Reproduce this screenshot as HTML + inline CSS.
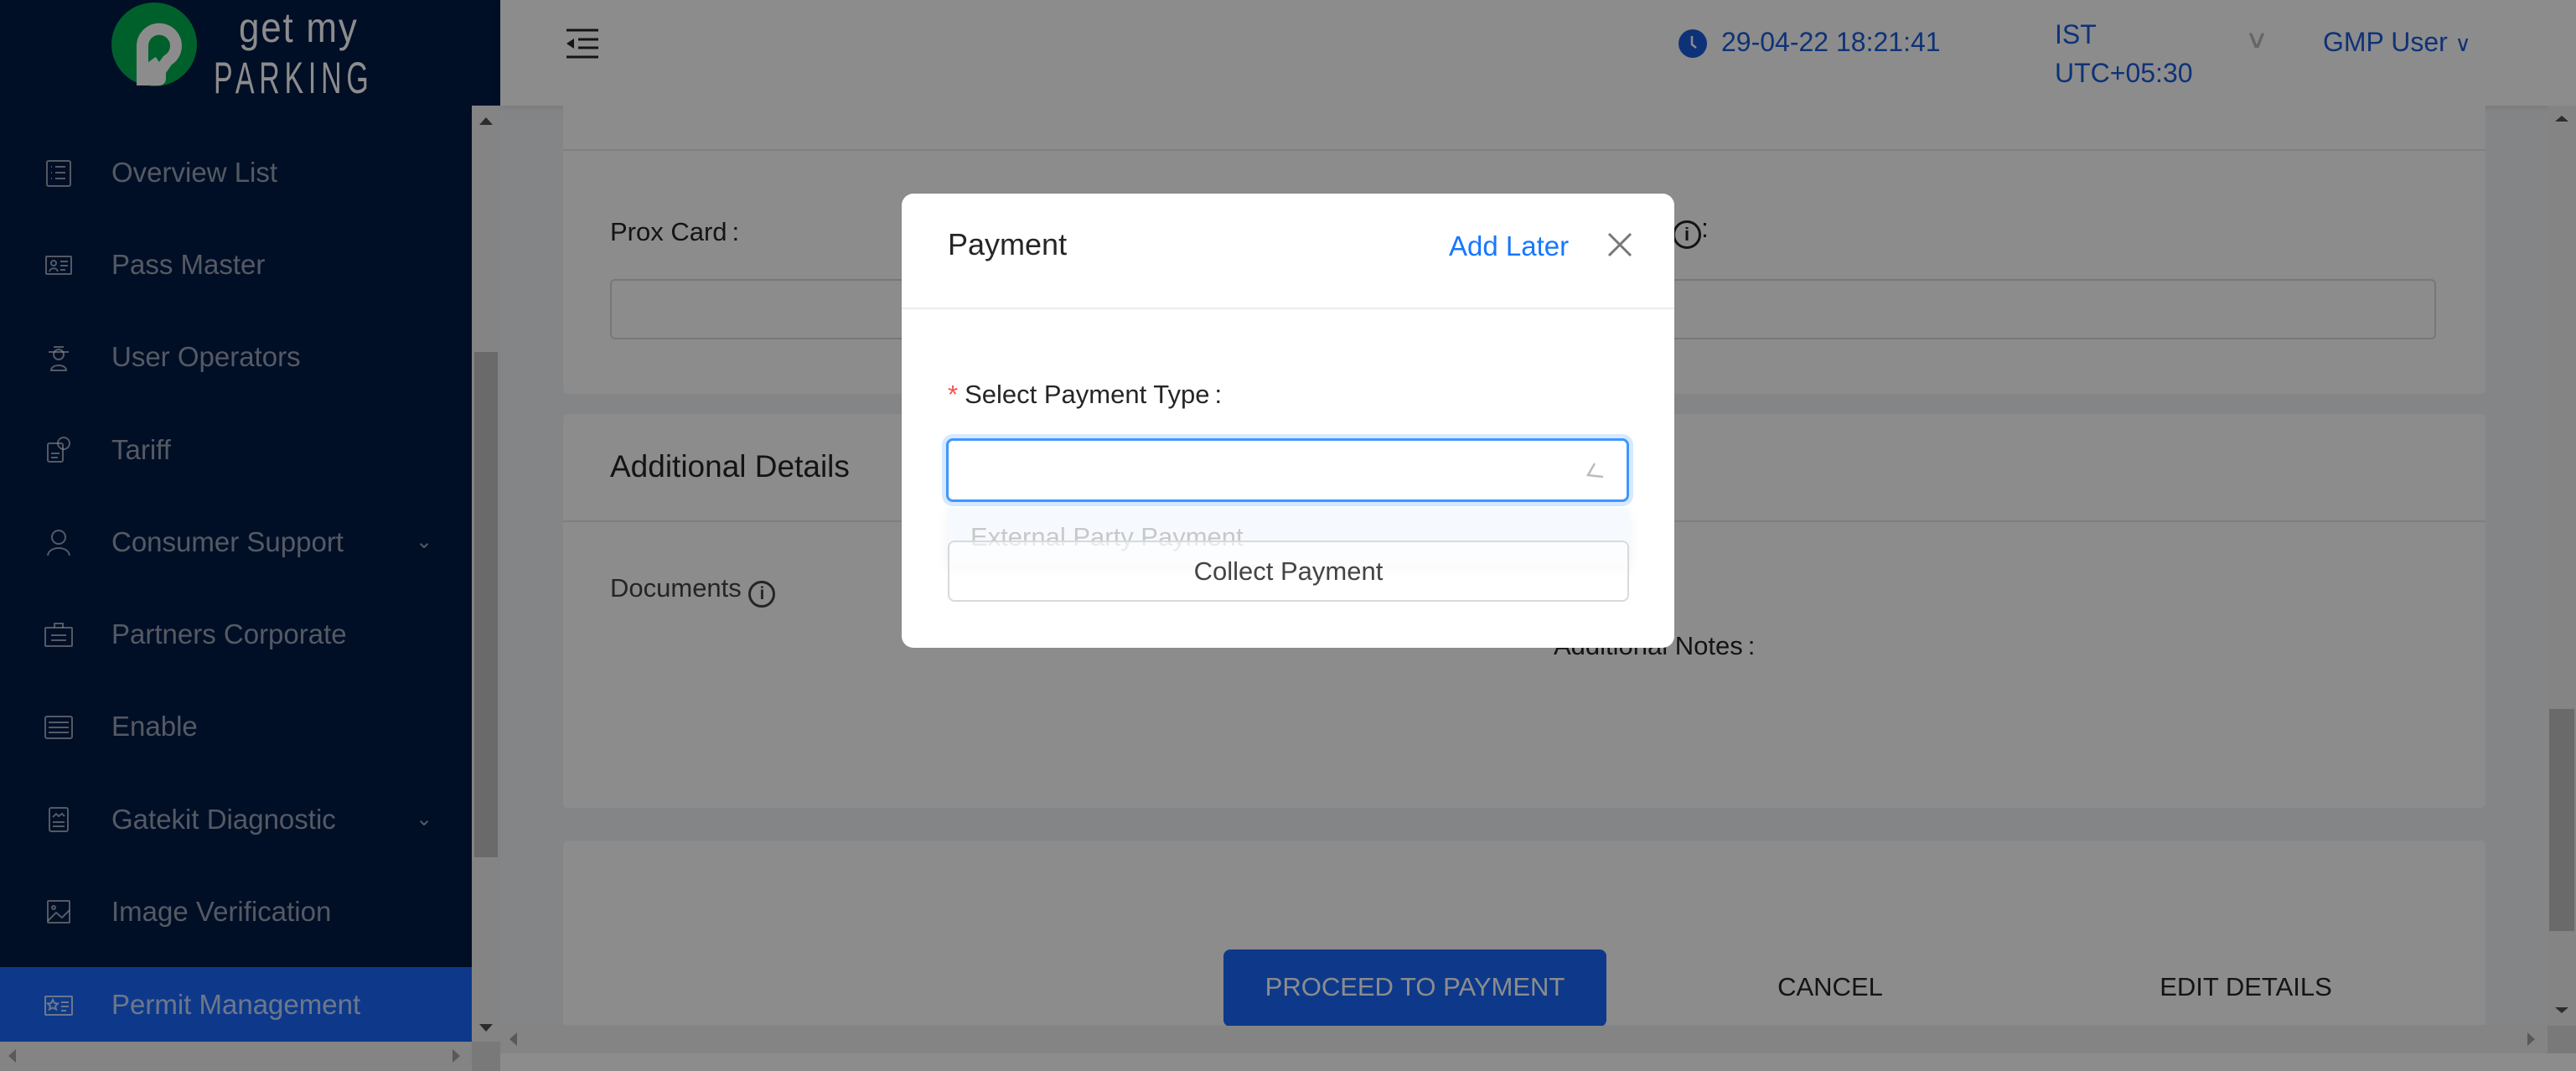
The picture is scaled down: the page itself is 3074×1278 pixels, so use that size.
<!DOCTYPE html>
<html><head><meta charset="utf-8"><style>
*{box-sizing:border-box;margin:0;padding:0}
body{width:3074px;height:1278px;overflow:hidden;position:relative;background:#f0f2f5;font-family:"Liberation Sans",Arial,sans-serif}
.abs{position:absolute}
#side{left:0;top:0;width:597px;height:1278px;background:#001b45}
.mi{position:absolute;left:0;width:563px;height:90px;color:rgba(255,255,255,.6);font-size:33px;line-height:90px;padding-left:133px}
.mi svg{position:absolute;left:52px;top:27px}
.mi .chev{position:absolute;left:496px;top:0;font-size:24px}
.sel{background:#1b69fb;color:rgba(255,255,255,.75)}
.sbv{background:#f1f1f1}
.card{background:#fff;border-radius:6px;position:absolute;left:672px;width:2294px}
.lbl{position:absolute;font-size:31px;color:#262626}
#ov{left:0;top:0;width:3074px;height:1278px;background:rgba(0,0,0,.45)}
#modal{left:1076px;top:231px;width:922px;height:542px;background:#fff;border-radius:14px}
</style></head><body>
<div id="side" class="abs">
  <svg class="abs" style="left:132px;top:2px" width="106" height="102" viewBox="0 0 106 102"><ellipse cx="52" cy="51" rx="51" ry="50" fill="#00b050"/><path d="M38 100 V52 a20 20 0 1 1 30 18 l-10 14 l-10 -14" fill="none" stroke="#fff" stroke-width="14"/><rect x="40" y="78" width="26" height="22" rx="8" fill="#fff"/></svg>
  <div class="abs" style="left:285px;top:8px;font-size:50px;line-height:1;color:#fff;letter-spacing:2px;transform:scaleX(.88);transform-origin:left top">get my</div>
  <div class="abs" style="left:255px;top:67px;font-size:53px;line-height:1;color:#fff;letter-spacing:9px;transform:scaleX(.64);transform-origin:left top">PARKING</div>
  <div class="mi" style="top:161px"><svg width="36" height="36" viewBox="0 0 36 36" fill="none" stroke="currentColor" stroke-width="2"><rect x="4" y="4" width="28" height="30" rx="2"/><path d="M14 11h12M14 18h12M14 25h12M9 11h1M9 18h1M9 25h1"/></svg>Overview List</div>
  <div class="mi" style="top:271px"><svg width="36" height="36" viewBox="0 0 36 36" fill="none" stroke="currentColor" stroke-width="2"><rect x="3" y="8" width="30" height="21" rx="1"/><circle cx="12" cy="16" r="3"/><path d="M7 26c1-5 9-5 10 0M20 14h9M20 19h9M20 24h6"/></svg>Pass Master</div>
  <div class="mi" style="top:381px"><svg width="36" height="36" viewBox="0 0 36 36" fill="none" stroke="currentColor" stroke-width="2"><path d="M6 12h24M12 6h12"/><circle cx="18" cy="15" r="6"/><path d="M9 34c0-8 18-8 18 0z"/></svg>User Operators</div>
  <div class="mi" style="top:492px"><svg width="36" height="36" viewBox="0 0 36 36" fill="none" stroke="currentColor" stroke-width="2"><rect x="5" y="10" width="18" height="22" rx="2"/><circle cx="24" cy="10" r="7"/><path d="M9 22h10M9 27h8"/></svg>Tariff</div>
  <div class="mi" style="top:602px"><svg width="36" height="36" viewBox="0 0 36 36" fill="none" stroke="currentColor" stroke-width="2"><circle cx="18" cy="12" r="8"/><path d="M5 34c1-12 25-12 26 0"/></svg>Consumer Support<span class="chev">⌄</span></div>
  <div class="mi" style="top:712px"><svg width="36" height="36" viewBox="0 0 36 36" fill="none" stroke="currentColor" stroke-width="2"><rect x="2" y="10" width="32" height="22" rx="1"/><path d="M13 10V5h10v5M9 19h18M9 25h18"/></svg>Partners Corporate</div>
  <div class="mi" style="top:822px"><svg width="36" height="36" viewBox="0 0 36 36" fill="none" stroke="currentColor" stroke-width="2"><rect x="2" y="6" width="32" height="26" rx="2"/><path d="M6 13h24M6 19h24M6 25h24"/></svg>Enable</div>
  <div class="mi" style="top:933px"><svg width="36" height="36" viewBox="0 0 36 36" fill="none" stroke="currentColor" stroke-width="2"><rect x="7" y="4" width="22" height="28" rx="2"/><path d="M11 15l4-4 3 3 4-3 3 3M11 21h14M11 26h14"/></svg>Gatekit Diagnostic<span class="chev">⌄</span></div>
  <div class="mi" style="top:1043px"><svg width="36" height="36" viewBox="0 0 36 36" fill="none" stroke="currentColor" stroke-width="2"><rect x="5" y="5" width="26" height="26" rx="1"/><circle cx="12" cy="13" r="2"/><path d="M5 29l10-10 7 6 9-9"/></svg>Image Verification</div>
  <div class="mi sel" style="top:1154px;height:89px;line-height:89px"><svg width="36" height="36" viewBox="0 0 36 36" fill="none" stroke="currentColor" stroke-width="2"><rect x="2" y="8" width="32" height="22" rx="1"/><path d="M11 12l2 4 4 .5-3 3 1 4-4-2-4 2 1-4-3-3 4-.5zM21 15h9M21 20h9M21 25h6"/></svg>Permit Management</div>
  <div class="abs sbv" style="left:563px;top:126px;width:34px;height:1117px"></div>
  <div class="abs" style="left:566px;top:420px;width:28px;height:603px;background:#c1c1c1"></div>
  <div class="abs" style="left:572px;top:140px;border:8px solid transparent;border-bottom:9px solid #505050;border-top:0"></div>
  <div class="abs" style="left:572px;top:1222px;border:8px solid transparent;border-top:9px solid #505050;border-bottom:0"></div>
  <div class="abs sbv" style="left:0;top:1243px;width:563px;height:35px"></div>
  <div class="abs" style="left:10px;top:1252px;border:8px solid transparent;border-right:9px solid #a3a3a3;border-left:0"></div>
  <div class="abs" style="left:540px;top:1252px;border:8px solid transparent;border-left:9px solid #a3a3a3;border-right:0"></div>
  <div class="abs" style="left:563px;top:1243px;width:34px;height:35px;background:#dcdcdc"></div>
</div>
<!-- header -->
<div class="abs" style="left:597px;top:0;width:2477px;height:126px;background:#fff;box-shadow:0 2px 8px rgba(0,0,0,.1)"></div>
<svg class="abs" style="left:676px;top:34px" width="40" height="36" viewBox="0 0 40 36"><path d="M0 2h38M14 13h24M14 23h24M0 34h38" stroke="#262626" stroke-width="3"/><path d="M0 18l9-6v12z" fill="#262626"/></svg>
<svg class="abs" style="left:2003px;top:35px" width="34" height="34" viewBox="0 0 34 34"><circle cx="17" cy="17" r="17" fill="#1a5bd9"/><path d="M16 8v10l5 4" stroke="#fff" stroke-width="2.5" fill="none"/></svg>
<div class="abs" style="left:2054px;top:32px;font-size:32px;color:#1a5bd9">29-04-22 18:21:41</div>
<div class="abs" style="left:2452px;top:18px;font-size:32px;color:#1a5bd9;line-height:46px">IST<br>UTC+05:30</div>
<div class="abs" style="left:2682px;top:30px;font-size:30px;color:#bbb;transform:scaleX(1.3)">∨</div>
<div class="abs" style="left:2772px;top:32px;font-size:32px;color:#1a5bd9">GMP User <span style="font-size:26px">∨</span></div>
<!-- content -->
<div class="card" style="top:100px;height:370px;border-top-left-radius:0;border-top-right-radius:0"><div class="abs" style="left:0;top:78px;width:100%;height:2px;background:#e8e8e8"></div></div>
<div class="lbl" style="left:728px;top:259px">Prox Card<span style="margin-left:6px">:</span></div>
<div class="abs" style="left:728px;top:333px;width:2179px;height:72px;border:2px solid #d9d9d9;border-radius:6px;background:#fff"></div>
<div class="lbl" style="left:1996px;top:254px;font-size:32px"><span style="display:inline-block;width:34px;height:34px;border:3px solid #262626;border-radius:50%;font-size:22px;text-align:center;line-height:28px;font-weight:bold;vertical-align:-4px">i</span>:</div>
<div class="card" style="top:494px;height:470px"><div class="abs" style="left:0;top:127px;width:100%;height:2px;background:#e8e8e8"></div></div>
<div class="lbl" style="left:728px;top:536px;font-size:37px">Additional Details</div>
<div class="lbl" style="left:728px;top:684px;color:#444">Documents <span style="display:inline-block;width:32px;height:32px;border:3px solid #444;border-radius:50%;font-size:21px;text-align:center;line-height:26px;font-weight:bold;vertical-align:-3px">i</span></div>
<div class="lbl" style="left:1854px;top:753px">Additional Notes<span style="margin-left:6px">:</span></div>
<div class="card" style="top:1003px;height:220px;border-bottom-left-radius:0;border-bottom-right-radius:0"></div>
<div class="abs" style="left:1460px;top:1133px;width:457px;height:92px;background:#1b69fb;border-radius:8px;color:#fff;font-size:31px;text-align:center;line-height:90px">PROCEED TO PAYMENT</div>
<div class="lbl" style="left:2084px;top:1160px;width:200px;text-align:center">CANCEL</div>
<div class="lbl" style="left:2530px;top:1160px;width:300px;text-align:center">EDIT DETAILS</div>
<div class="abs sbv" style="left:3040px;top:126px;width:34px;height:1098px"></div>
<div class="abs" style="left:3042px;top:846px;width:30px;height:265px;background:#c1c1c1"></div>
<div class="abs" style="left:3049px;top:138px;border:8px solid transparent;border-bottom:7px solid #505050;border-top:0"></div>
<div class="abs" style="left:3049px;top:1202px;border:8px solid transparent;border-top:7px solid #505050;border-bottom:0"></div>
<div class="abs sbv" style="left:597px;top:1224px;width:2443px;height:33px"></div>
<div class="abs" style="left:608px;top:1232px;border:8px solid transparent;border-right:9px solid #a3a3a3;border-left:0"></div>
<div class="abs" style="left:3016px;top:1232px;border:8px solid transparent;border-left:9px solid #a3a3a3;border-right:0"></div>
<div class="abs" style="left:3040px;top:1224px;width:34px;height:33px;background:#dcdcdc"></div>
<div class="abs" style="left:597px;top:1257px;width:2477px;height:21px;background:#fff"></div>
<div id="ov" class="abs"></div>
<!-- modal -->
<div id="modal" class="abs">
  <div class="abs" style="left:55px;top:40px;font-size:36px;color:#262626">Payment</div>
  <div class="abs" style="left:653px;top:44px;font-size:33px;color:#1677ff">Add Later</div>
  <svg class="abs" style="left:842px;top:46px" width="30" height="30" viewBox="0 0 30 30"><path d="M2 2l26 26M28 2L2 28" stroke="#777" stroke-width="3"/></svg>
  <div class="abs" style="left:0;top:136px;width:100%;height:2px;background:#ececec"></div>
  <div class="abs" style="left:55px;top:222px;font-size:31px;color:#262626"><span style="color:#ff4d4f;margin-right:8px">*</span>Select Payment Type<span style="margin-left:6px">:</span></div>
  <div class="abs" style="left:53px;top:292px;width:815px;height:76px;border:3px solid #4096ff;border-radius:8px;box-shadow:0 0 0 5px #d6e9ff;background:#fff"></div>
  <svg class="abs" style="left:815px;top:318px" width="24" height="24" viewBox="0 0 24 24"><path d="M12 4L4 18l18 2" stroke="#bbb" stroke-width="2.5" fill="none"/></svg>
  <div class="abs" style="left:55px;top:375px;width:813px;height:68px;background:#f6faff;box-shadow:0 6px 14px rgba(0,0,0,.06)"></div>
  <div class="abs" style="left:82px;top:392px;font-size:31px;color:#c8c8c8">External Party Payment</div>
  <div class="abs" style="left:55px;top:414px;width:813px;height:73px;border:2px solid #d9d9d9;border-radius:8px;background:rgba(255,255,255,.6);font-size:31px;color:#444;text-align:center;line-height:70px">Collect Payment</div>
</div>
</body></html>
